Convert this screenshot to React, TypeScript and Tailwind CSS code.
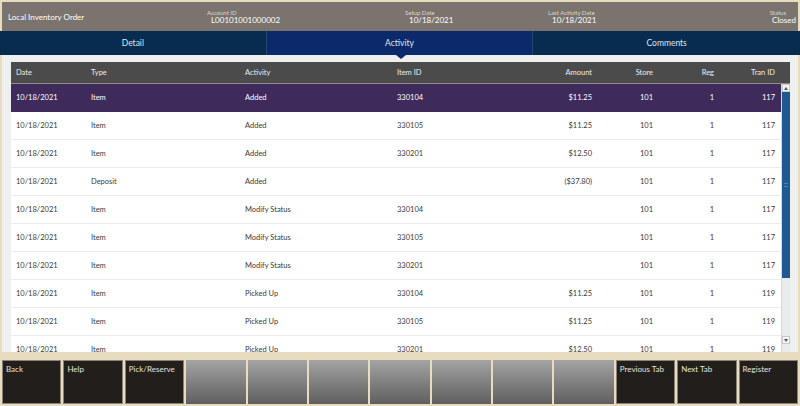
const rows = [
  { type: 'Item', activity: 'Added', item: '330104', amount: '$11.25', tran: '117' },
  { type: 'Item', activity: 'Added', item: '330105', amount: '$11.25', tran: '117' },
  { type: 'Item', activity: 'Added', item: '330201', amount: '$12.50', tran: '117' },
  { type: 'Deposit', activity: 'Added', item: '', amount: '($37.80)', tran: '117' },
  { type: 'Item', activity: 'Modify Status', item: '330104', amount: '', tran: '117' },
  { type: 'Item', activity: 'Modify Status', item: '330105', amount: '', tran: '117' },
  { type: 'Item', activity: 'Modify Status', item: '330201', amount: '', tran: '117' },
  { type: 'Item', activity: 'Picked Up', item: '330104', amount: '$11.25', tran: '119' },
  { type: 'Item', activity: 'Picked Up', item: '330105', amount: '$11.25', tran: '119' },
  { type: 'Item', activity: 'Picked Up', item: '330201', amount: '$12.50', tran: '119' },
]

const buttons = ['Back', 'Help', 'Pick/Reserve', '', '', '', '', '', '', '', 'Previous Tab', 'Next Tab', 'Register']

const cols = 'grid grid-cols-[75px_154px_152px_114px_81px_61px_61px_61px] pl-[5px] items-center'

function HeaderField({ label, value, right }: { label: string; value: string; right?: boolean }) {
  return (
    <div className={right ? 'flex flex-col items-end' : 'flex flex-col items-start'}>
      <span className="text-[6px] leading-[7px] text-[#ddd8d3]">{label}</span>
      <span className={right ? 'text-[8px] leading-[9px] text-white -mr-[10px]' : 'text-[8px] leading-[9px] text-white pl-[4px]'}>{value}</span>
    </div>
  )
}

export default function App() {
  return (
    <div className="w-[800px] h-[406px] bg-[#e7dbc0] flex flex-col px-[2px] pt-[2px] overflow-hidden antialiased" style={{ fontFamily: 'Lato, "Open Sans", sans-serif' }}>
      {/* header */}
      <div className="h-[29px] bg-[#7b736d] flex items-center text-white">
        <div className="w-[205px] pl-[6px] text-[8px]">Local Inventory Order</div>
        <div className="w-[198px]">
          <HeaderField label="Account ID" value="L00101001000002" />
        </div>
        <div className="w-[143px]">
          <HeaderField label="Setup Date" value="10/18/2021" />
        </div>
        <div className="flex-1">
          <HeaderField label="Last Activity Date" value="10/18/2021" />
        </div>
        <div className="pr-[12px]">
          <HeaderField label="Status" value="Closed" right />
        </div>
      </div>

      {/* tabs */}
      <div className="h-[24px] grid grid-cols-3 text-[8.5px] text-[#dfe6ef] -mx-[2px]">
        <div className="bg-[#082b50] flex items-center justify-center border-r border-[#24456d]">Detail</div>
        <div className="bg-[#0c2a6b] flex items-center justify-center border-r border-[#24456d]">Activity</div>
        <div className="bg-[#082b50] flex items-center justify-center">Comments</div>
      </div>

      {/* content */}
      <div className="relative h-[297px] bg-[#eef0f0] pl-[9px] pr-[8px] pt-[7px] overflow-hidden">
        <div className="absolute left-[394px] top-0 w-0 h-0 border-l-[5px] border-r-[5px] border-t-[4px] border-l-transparent border-r-transparent border-t-[#0c2a6b]" />
        <div className="h-[22px] bg-[#4b4b4b] border-b border-[#8e8e8e] text-[#ececec] text-[7.5px]">
          <div className={cols + ' h-full'}>
            <span>Date</span>
            <span>Type</span>
            <span>Activity</span>
            <span>Item ID</span>
            <span className="text-right">Amount</span>
            <span className="text-right">Store</span>
            <span className="text-right">Reg</span>
            <span className="text-right">Tran ID</span>
          </div>
        </div>
        <div className="flex">
          <div className="w-[770px] bg-white">
            {rows.map((r, i) => (
              <div
                key={i}
                className={
                  i === 0
                    ? cols + ' h-[28px] bg-[#3e2a5b] text-white text-[7.5px]'
                    : cols + ' h-[28px] border-b border-[#ececec] text-[#3a3a3a] text-[7.5px]'
                }
              >
                <span>10/18/2021</span>
                <span>{r.type}</span>
                <span>{r.activity}</span>
                <span>{r.item}</span>
                <span className="text-right">{r.amount}</span>
                <span className="text-right">101</span>
                <span className="text-right">1</span>
                <span className="text-right">{r.tran}</span>
              </div>
            ))}
          </div>
          {/* scrollbar */}
          <div className="w-[9px] flex flex-col bg-[#e9eaea] border-l border-[#d8d8d8]">
            <div className="h-[8px] bg-[#f4f4f4] border border-[#c9c9c9] flex items-center justify-center">
              <div className="w-0 h-0 border-l-[2px] border-r-[2px] border-b-[3px] border-l-transparent border-r-transparent border-b-[#555]" />
            </div>
            <div className="h-[186px] bg-[#1e5a8f] flex items-center justify-center">
              <div className="w-[4px] h-[4px] border-y border-[#4c81b4]" />
            </div>
            <div className="h-[58px]" />
            <div className="h-[8px] bg-[#f4f4f4] border border-[#c9c9c9] flex items-center justify-center">
              <div className="w-0 h-0 border-l-[2px] border-r-[2px] border-t-[3px] border-l-transparent border-r-transparent border-t-[#555]" />
            </div>
          </div>
        </div>
      </div>

      {/* footer */}
      <div className="mt-[8px] h-[44px] grid grid-cols-[repeat(13,minmax(0,1fr))] gap-[2px]">
        {buttons.map((b, i) =>
          b ? (
            <div key={i} className="bg-[#221e1b] border border-[#8a8275] px-[3px] pt-[2px] text-[8px] text-[#e6e3de] leading-[12px]">
              {b}
            </div>
          ) : (
            <div key={i} className="bg-gradient-to-b from-[#a4a4a4] to-[#5f5f5f]" />
          )
        )}
      </div>
    </div>
  )
}
